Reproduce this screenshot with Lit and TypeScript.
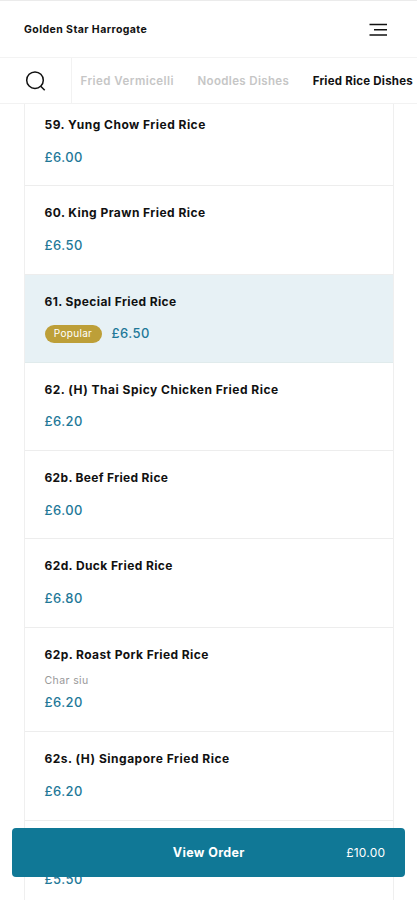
import { LitElement, html, css, nothing } from "lit";
import { customElement, property } from "lit/decorators.js";

interface Dish {
  name: string;
  price: string;
  tracking: number;
  note?: string;
  popular?: boolean;
}

const DISHES: Dish[] = [
  { name: "59. Yung Chow Fried Rice", price: "£6.00", tracking: 0.48 },
  { name: "60. King Prawn Fried Rice", price: "£6.50", tracking: 0.45 },
  { name: "61. Special Fried Rice", price: "£6.50", tracking: 0.4, popular: true },
  { name: "62. (H) Thai Spicy Chicken Fried Rice", price: "£6.20", tracking: 0.49 },
  { name: "62b. Beef Fried Rice", price: "£6.00", tracking: 0.33 },
  { name: "62d. Duck Fried Rice", price: "£6.80", tracking: 0.4 },
  { name: "62p. Roast Pork Fried Rice", price: "£6.20", tracking: 0.42, note: "Char siu" },
  { name: "62s. (H) Singapore Fried Rice", price: "£6.20", tracking: 0.51 },
  { name: "", price: "£5.50", tracking: 0 },
];

@customElement("dish-row")
class DishRow extends LitElement {
  @property({ attribute: false }) dish!: Dish;

  static styles = css`
    :host { display: block; }
    .row {
      box-sizing: border-box;
      height: 88.3px;
      padding: 17px 20px 0 19.5px;
      border-bottom: 1.5px solid #ededed;
    }
    .noted { height: 104.6px; }
    .popular { background: #e7f1f5; border-color: #e0ebec; }
    .name {
      height: 20px;
      font-size: 12px;
      line-height: 20px;
      font-weight: 650;
      color: #111;
      white-space: nowrap;
    }
    .note {
      height: 16px;
      margin-top: 8px;
      font-size: 10.5px;
      line-height: 16px;
      letter-spacing: 0.4px;
      color: #999;
    }
    .line { display: flex; align-items: center; gap: 10px; height: 20px; margin-top: 11.7px; }
    .noted .line { margin-top: 3.5px; }
    .price { font-size: 13px; font-weight: 500; letter-spacing: 0.45px; color: #1e7898; }
    .tag {
      width: 57px;
      height: 18px;
      margin-top: 2px;
      border-radius: 9px;
      background: #bd9f38;
      color: #fff;
      font-size: 10px;
      line-height: 17px;
      letter-spacing: 0.3px;
      text-align: center;
    }
  `;

  render() {
    const d = this.dish;
    return html`<div class="row ${d.popular ? "popular" : ""} ${d.note ? "noted" : ""}">
      <div class="name" style="letter-spacing: ${d.tracking}px">${d.name}</div>
      ${d.note ? html`<div class="note">${d.note}</div>` : nothing}
      <div class="line">
        ${d.popular ? html`<span class="tag">Popular</span>` : nothing}
        <span class="price">${d.price}</span>
      </div>
    </div>`;
  }
}

@customElement("app-root")
class AppRoot extends LitElement {
  static styles = css`
    :host {
      display: flex;
      flex-direction: column;
      position: relative;
      box-sizing: border-box;
      height: 900px;
      overflow: hidden;
      background: #fff;
      border-top: 1.5px solid #ebebeb;
      font-family: Inter, "Open Sans", sans-serif;
    }
    .header {
      flex: none;
      display: flex;
      align-items: center;
      justify-content: space-between;
      box-sizing: border-box;
      height: 57px;
      padding: 0 30px 0 24px;
      border-bottom: 1.5px solid #f3f3f3;
    }
    .brand { margin-top: 1px; font-size: 10.5px; font-weight: 650; letter-spacing: 0.43px; color: #111; }
    .menu { display: block; margin-top: 1px; }
    .nav {
      flex: none;
      display: flex;
      align-items: center;
      box-sizing: border-box;
      height: 46px;
      border-bottom: 1.5px solid #f2f2f2;
      overflow: hidden;
    }
    .search {
      flex: none;
      display: flex;
      align-items: center;
      box-sizing: border-box;
      width: 72px;
      height: 46px;
      padding-left: 24.5px;
      border-right: 1.5px solid #f2f2f2;
    }
    .tabs { display: flex; gap: 23.5px; padding-left: 8.5px; white-space: nowrap; }
    .tab { font-size: 11.5px; font-weight: 600; letter-spacing: 0.46px; color: #c6c6c6; }
    .wide { letter-spacing: 0.35px; }
    .active { color: #111; font-weight: 650; letter-spacing: 0.22px; }
    .viewport { flex: 1; min-height: 0; overflow: hidden; }
    .list {
      box-sizing: border-box;
      width: 370px;
      margin: -6.1px 0 0 24px;
      border: solid #efefef;
      border-width: 0 1.5px;
    }
    .order {
      position: absolute;
      left: 12.4px;
      right: 11.8px;
      top: 827.3px;
      height: 48.5px;
      box-sizing: border-box;
      display: grid;
      grid-template-columns: 1fr auto 1fr;
      align-items: center;
      padding: 0 20px;
      border: 0;
      border-radius: 4px;
      background: #107896;
      color: #fff;
      font-family: inherit;
    }
    .label { grid-column: 2; font-size: 12.5px; font-weight: 700; letter-spacing: 0.35px; }
    .total { text-align: right; font-size: 12px; letter-spacing: 0.2px; }
  `;

  render() {
    return html`
      <div class="header">
        <span class="brand">Golden Star Harrogate</span>
        <svg class="menu" width="18" height="14" viewBox="0 0 18 14" stroke="#111" stroke-width="1.6">
          <path d="M0.5 1.5H18M5 6.8H18M0.5 12H18" />
        </svg>
      </div>
      <div class="nav">
        <div class="search">
          <svg width="22" height="22" viewBox="0 0 22 22" fill="none" stroke="#111" stroke-width="1.5">
            <circle cx="10" cy="10.2" r="8.3" />
            <path d="M15.7 16.2L19.7 20.2" />
          </svg>
        </div>
        <div class="tabs">
          <span class="tab">Fried Vermicelli</span>
          <span class="tab wide">Noodles Dishes</span>
          <span class="tab active">Fried Rice Dishes</span>
        </div>
      </div>
      <div class="viewport">
        <div class="list">${DISHES.map((d) => html`<dish-row .dish=${d}></dish-row>`)}</div>
      </div>
      <button class="order">
        <span class="label">View Order</span>
        <span class="total">£10.00</span>
      </button>
    `;
  }
}
